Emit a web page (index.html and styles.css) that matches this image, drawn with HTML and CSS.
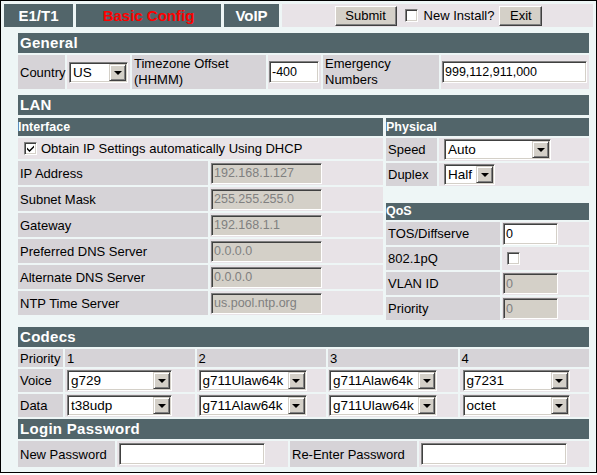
FILE: index.html
```html
<!DOCTYPE html>
<html>
<head>
<meta charset="utf-8">
<link rel="stylesheet" href="styles.css">
</head>
<body>
<div class="frame">
  <div class="tabs">
    <div class="tab">E1/T1</div>
    <div class="tab active">Basic Config</div>
    <div class="tab">VoIP</div>
    <div class="toolbar">
      <span class="btn submit">Submit</span>
      <span class="cb"></span>
      <span class="tlabel">New Install?</span>
      <span class="btn exit">Exit</span>
    </div>
  </div>

  <div class="main">
    <div class="hdr">General</div>
    <div class="grid general-row">
      <div class="lbl">Country</div>
      <div class="val p2"><span class="sel w59"><span class="v">US</span><span class="b"></span></span></div>
      <div class="lbl lh">Timezone Offset<br>(HHMM)</div>
      <div class="val p1"><span class="inp w50">-400</span></div>
      <div class="lbl lh">Emergency<br>Numbers</div>
      <div class="val p1"><span class="inp w145">999,112,911,000</span></div>
    </div>

    <div class="hdr lan-hdr">LAN</div>
    <div class="lan">
      <div class="lan-left">
        <div class="sub">Interface</div>
        <div class="val dhcp"><span class="cb checked"><svg width="9" height="9" viewBox="0 0 9 9"><path d="M1 3.5 L3.5 6 L8 1.5 L8 3.5 L3.5 8 L1 5.5 Z" fill="#000"/></svg></span><span>Obtain IP Settings automatically Using DHCP</span></div>
        <div class="grid iface-row"><div class="lbl">IP Address</div><div class="val p1"><span class="inp dis w111">192.168.1.127</span></div></div>
        <div class="grid iface-row"><div class="lbl">Subnet Mask</div><div class="val p1"><span class="inp dis w111">255.255.255.0</span></div></div>
        <div class="grid iface-row"><div class="lbl">Gateway</div><div class="val p1"><span class="inp dis w111">192.168.1.1</span></div></div>
        <div class="grid iface-row"><div class="lbl">Preferred DNS Server</div><div class="val p1"><span class="inp dis w111">0.0.0.0</span></div></div>
        <div class="grid iface-row"><div class="lbl">Alternate DNS Server</div><div class="val p1"><span class="inp dis w111">0.0.0.0</span></div></div>
        <div class="grid iface-row"><div class="lbl">NTP Time Server</div><div class="val p1"><span class="inp dis w111">us.pool.ntp.org</span></div></div>
      </div>
      <div class="lan-right">
        <div class="physical">
          <div class="sub">Physical</div>
          <div class="grid phys-row"><div class="lbl">Speed</div><div class="val p5"><span class="sel w107"><span class="v">Auto</span><span class="b"></span></span></div></div>
          <div class="grid phys-row"><div class="lbl">Duplex</div><div class="val p5"><span class="sel w51"><span class="v">Half</span><span class="b"></span></span></div></div>
        </div>
        <div class="qos">
          <div class="sub qos-hdr">QoS</div>
          <div class="grid qos-row"><div class="lbl">TOS/Diffserve</div><div class="val p1"><span class="inp w55">0</span></div></div>
          <div class="grid qos-row"><div class="lbl">802.1pQ</div><div class="val p5"><span class="cb"></span></div></div>
          <div class="grid qos-row"><div class="lbl">VLAN ID</div><div class="val p1"><span class="inp dis w55">0</span></div></div>
          <div class="grid qos-row"><div class="lbl">Priority</div><div class="val p1"><span class="inp dis w55">0</span></div></div>
        </div>
      </div>
    </div>

    <div class="hdr codecs-hdr">Codecs</div>
    <div class="grid codec-row prio">
      <div class="lbl">Priority</div>
      <div class="lbl">1</div>
      <div class="lbl">2</div>
      <div class="lbl">3</div>
      <div class="lbl">4</div>
    </div>
    <div class="grid codec-row">
      <div class="lbl">Voice</div>
      <div class="val p2"><span class="sel w105"><span class="v">g729</span><span class="b"></span></span></div>
      <div class="val p2"><span class="sel w108"><span class="v">g711Ulaw64k</span><span class="b"></span></span></div>
      <div class="val p1"><span class="sel w108"><span class="v">g711Alaw64k</span><span class="b"></span></span></div>
      <div class="val p3"><span class="sel w107"><span class="v">g7231</span><span class="b"></span></span></div>
    </div>
    <div class="grid codec-row">
      <div class="lbl">Data</div>
      <div class="val p2"><span class="sel w105"><span class="v">t38udp</span><span class="b"></span></span></div>
      <div class="val p2"><span class="sel w108"><span class="v">g711Alaw64k</span><span class="b"></span></span></div>
      <div class="val p1"><span class="sel w108"><span class="v">g711Ulaw64k</span><span class="b"></span></span></div>
      <div class="val p3"><span class="sel w107"><span class="v">octet</span><span class="b"></span></span></div>
    </div>

    <div class="hdr login-hdr">Login Password</div>
    <div class="grid login-row">
      <div class="lbl">New Password</div>
      <div class="val p2"><span class="inp w146"></span></div>
      <div class="lbl">Re-Enter Password</div>
      <div class="val p2"><span class="inp w146"></span></div>
    </div>
  </div>
</div>
</body>
</html>
```

FILE: styles.css
```css
html, body {
  margin: 0;
  padding: 0;
  background: #ffffff;
}
body {
  font-family: "Liberation Sans", Arial, sans-serif;
  font-size: 13px;
  color: #000;
}
.frame {
  width: 597px;
  height: 473px;
  box-sizing: border-box;
  border: 1px solid #000;
  background: #eef6f6;
  padding: 3px;
}
.tabs {
  display: grid;
  grid-template-columns: 69px 145px 55px 1fr;
  column-gap: 3px;
  height: 23px;
}
.tab {
  background: #52656a;
  color: #fff;
  font-weight: bold;
  font-size: 15px;
  display: flex;
  align-items: center;
  justify-content: center;
}
.tab.active {
  color: #ff0000;
}
.toolbar {
  background: #e8e3e7;
  display: flex;
  align-items: center;
  justify-content: center;
  padding-left: 2px;
}
.btn {
  box-sizing: border-box;
  height: 20px;
  background: #d4d0c8;
  border: 1px solid;
  border-color: #fff #404040 #404040 #fff;
  box-shadow: inset -1px -1px 0 #808080;
  display: inline-flex;
  align-items: center;
  justify-content: center;
  font-size: 13px;
}
.submit { width: 62px; }
.exit { width: 43px; }
.tlabel { margin: 0 5px 0 6px; }
.toolbar .cb { margin-left: 8px; }

.cb {
  display: inline-flex;
  align-items: center;
  justify-content: center;
  box-sizing: border-box;
  width: 13px;
  height: 13px;
  background: #fff;
  border: 1px solid;
  border-color: #808080 #fff #fff #808080;
  box-shadow: inset 1px 1px 0 #404040, inset -1px -1px 0 #d4d0c8;
}

.main {
  margin: 6px 0 0 14px;
  width: 571px;
}
.hdr {
  background: #52656a;
  color: #fff;
  font-weight: bold;
  font-size: 15px;
  height: 20px;
  line-height: 20px;
  padding-left: 2px;
  margin-bottom: 2px;
  letter-spacing: 0.3px;
}
.sub {
  background: #52656a;
  color: #fff;
  font-weight: bold;
  font-size: 12.5px;
  height: 18px;
  line-height: 18px;
  margin-bottom: 2px;
}
.grid {
  display: grid;
  column-gap: 2px;
}
.lbl {
  background: #d6d3d7;
  display: flex;
  align-items: center;
  padding-left: 2px;
}
.lh { line-height: 16px; }
.val {
  background: #e8e3e7;
  display: flex;
  align-items: center;
}
.p1 { padding-left: 1px; }
.p2 { padding-left: 2px; }
.p3 { padding-left: 3px; }
.p5 { padding-left: 5px; }

.general-row {
  grid-template-columns: 47px 63px 134px 53px 116px 148px;
  height: 34px;
}
.lan-hdr { margin-top: 6px; margin-bottom: 3px; }
.lan {
  display: grid;
  grid-template-columns: 365px 203px;
  column-gap: 3px;
  height: 204px;
}
.dhcp {
  height: 21px;
  margin-bottom: 2px;
  padding-left: 6px;
}
.dhcp .cb { margin-right: 4px; }
.iface-row {
  grid-template-columns: 190px 173px;
  height: 24px;
  margin-bottom: 2px;
}
.phys-row {
  grid-template-columns: 51px 150px;
  height: 23px;
  margin-bottom: 2px;
}
.qos { margin-top: 17px; }
.qos-hdr { height: 17px; line-height: 17px; }
.qos-row {
  grid-template-columns: 114px 87px;
  height: 23px;
  margin-bottom: 2px;
}
.codecs-hdr { margin-top: 5px; }
.codec-row {
  grid-template-columns: 45px repeat(4, 1fr);
  height: 23px;
  margin-bottom: 2px;
}
.codec-row.prio { height: 18px; }
.login-hdr { margin-top: 1px; }
.login-row {
  grid-template-columns: 97px 171px 127px 170px;
  height: 26px;
}

.inp {
  box-sizing: border-box;
  height: 22px;
  background: #fff;
  border: 1px solid;
  border-color: #808080 #fff #fff #808080;
  box-shadow: inset 1px 1px 0 #404040, inset -1px -1px 0 #d4d0c8;
  display: inline-flex;
  align-items: center;
  padding-left: 2px;
  font-size: 12.5px;
  overflow: hidden;
  white-space: nowrap;
}
.inp.dis {
  background: #d4d0c8;
  color: #808080;
  height: 21px;
}
.sel {
  box-sizing: border-box;
  height: 21px;
  background: #fff;
  border: 1px solid;
  border-color: #808080 #fff #fff #808080;
  box-shadow: inset 1px 1px 0 #404040, inset -1px -1px 0 #d4d0c8;
  display: inline-flex;
  align-items: center;
  padding: 1px 1px 1px 2px;
  font-size: 13.5px;
}
.sel .v {
  flex: 1;
  padding-left: 1px;
  white-space: nowrap;
  overflow: hidden;
}
.sel .b {
  box-sizing: border-box;
  width: 17px;
  height: 17px;
  background: #d4d0c8;
  border: 1px solid;
  border-color: #d4d0c8 #404040 #404040 #d4d0c8;
  box-shadow: inset 1px 1px 0 #fff, inset -1px -1px 0 #808080;
  display: flex;
  align-items: center;
  justify-content: center;
}
.sel .b::after {
  content: "";
  width: 0;
  height: 0;
  border-left: 4px solid transparent;
  border-right: 4px solid transparent;
  border-top: 4px solid #000;
  margin-top: 1px;
}
.w50 { width: 50px; }
.w51 { width: 51px; }
.w55 { width: 55px; }
.w59 { width: 59px; }
.w105 { width: 105px; }
.w107 { width: 107px; }
.w108 { width: 108px; }
.w111 { width: 111px; }
.w145 { width: 145px; }
.w146 { width: 146px; }
```
